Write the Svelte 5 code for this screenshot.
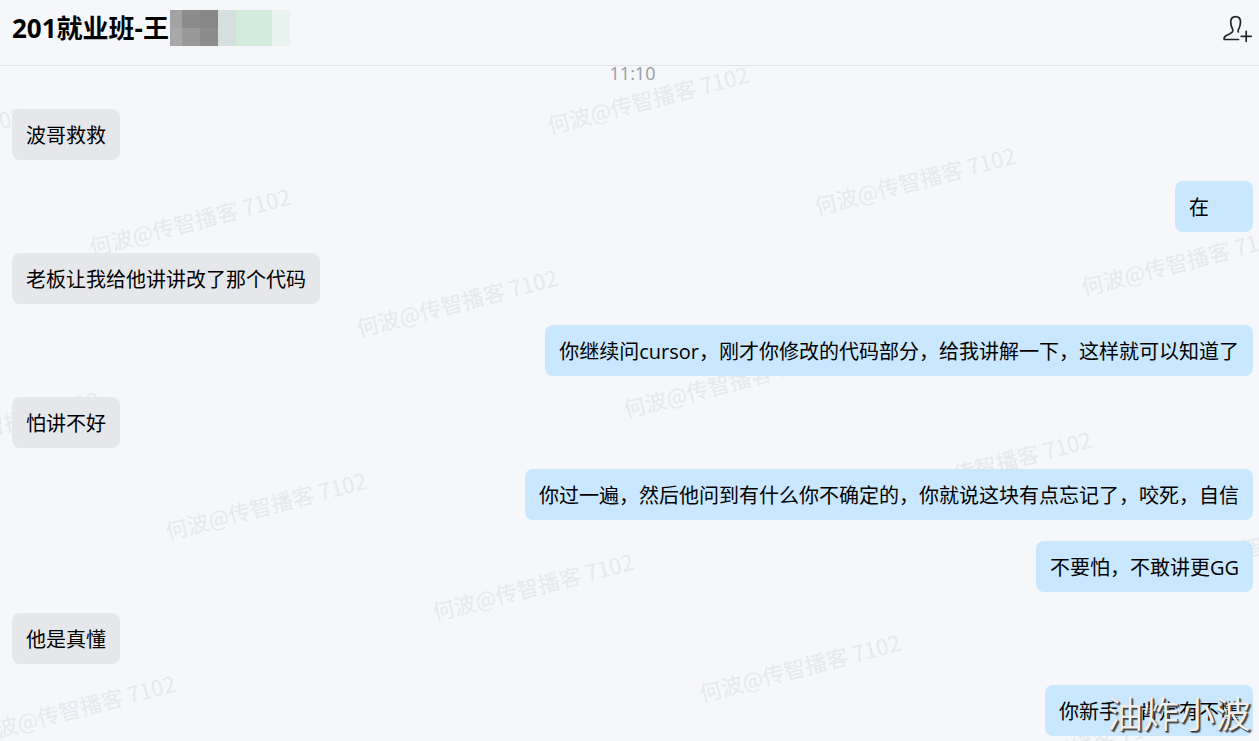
<script>
  const messages = [
    { id: 1, mine: false, text: '波哥救救' },
    { id: 2, mine: true, text: '在' },
    { id: 3, mine: false, text: '老板让我给他讲讲改了那个代码' },
    { id: 4, mine: true, text: '你继续问cursor，刚才你修改的代码部分，给我讲解一下，这样就可以知道了' },
    { id: 5, mine: false, text: '怕讲不好' },
    { id: 6, mine: true, text: '你过一遍，然后他问到有什么你不确定的，你就说这块有点忘记了，咬死，自信' },
    { id: 7, mine: true, text: '不要怕，不敢讲更GG' },
    { id: 8, mine: false, text: '他是真懂' },
    { id: 9, mine: true, text: '你新手，肯定有不懂' },
  ];

  // The watermark repeats on a slanted grid: each column and row shifts both axes.
  const cells = [
    [0, 0], [1, 0], [2, 0],
    [-3, 1], [-2, 1], [-1, 1], [0, 1], [1, 1], [2, 1],
    [-3, 2], [-2, 2], [-1, 2], [0, 2], [1, 2],
    [-3, 3],
  ];
  const marks = cells.map(([c, r]) => ({
    x: 550 + 267 * c + 76 * r,
    y: 68 + 81 * c + 284 * r,
  }));

  const mosaic = [
    { x: 0, y: 0, w: 12, h: 18, fill: '#a3a3a3' },
    { x: 12, y: 0, w: 18, h: 18, fill: '#8c8c8c' },
    { x: 30, y: 0, w: 18, h: 18, fill: '#868686' },
    { x: 0, y: 18, w: 12, h: 18, fill: '#a8a8a8' },
    { x: 12, y: 18, w: 18, h: 18, fill: '#999999' },
    { x: 30, y: 18, w: 18, h: 18, fill: '#8c8c8c' },
    { x: 48, y: 0, w: 18, h: 36, fill: '#d5dfde' },
    { x: 66, y: 0, w: 36, h: 36, fill: '#d2ecdc' },
    { x: 102, y: 0, w: 18, h: 36, fill: '#e8f3ef' },
  ];
</script>

<div class="page">
  <header>
    <h1>201就业班-王</h1>
    <svg class="mosaic" width="120" height="36" viewBox="0 0 120 36" aria-hidden="true" shape-rendering="crispEdges">
      {#each mosaic as m}
        <rect x={m.x} y={m.y} width={m.w} height={m.h} fill={m.fill} />
      {/each}
    </svg>
    <button type="button" aria-label="添加成员">
      <svg width="32" height="30" viewBox="0 0 32 30" fill="none" stroke="#22252b" stroke-width="1.7" stroke-linecap="round" stroke-linejoin="round">
        <path d="M17.5 25.5H3.2C2.5 22.8 4.5 21.8 8 20.3C11 19 12.6 17.4 11.6 15.2C10.4 12.8 9.6 10.4 9.7 8C9.8 4.5 11.8 2.6 14.6 2.6C17.6 2.6 19.5 4.7 19.5 8C19.5 11.2 18.6 13.5 17.3 15.8C16.9 16.6 16.9 17.2 17.4 17.9" />
        <path d="M25.2 17.3V27.3M20.2 22.3H30.2" />
      </svg>
    </button>
  </header>

  <main>
    <svg class="watermark" aria-hidden="true">
      {#each marks as m}
        <text transform="translate({m.x} {m.y}) rotate(-14.5)">何波@传智播客 7102</text>
      {/each}
    </svg>
    <time>11:10</time>
    <ul>
      {#each messages as m (m.id)}
        <li class:mine={m.mine}><p>{m.text}</p></li>
      {/each}
    </ul>
    <span class="signature">油炸小波</span>
  </main>
</div>

<style>
  :global(body) {
    background: #f5f7fb;
  }
  .page {
    display: flex;
    flex-direction: column;
    min-height: 100vh;
    font-family: "Open Sans", "Noto Sans CJK SC", sans-serif;
    color: #000;
    background: #f5f7fb;
  }
  header {
    display: flex;
    align-items: center;
    gap: 1px;
    height: 66px;
    box-sizing: border-box;
    padding: 0 6px 10px 12px;
    border-bottom: 1px solid #e1e3e8;
  }
  h1 {
    margin: 0;
    font-size: 26px;
    line-height: 36px;
    font-weight: 700;
    white-space: nowrap;
  }
  .mosaic {
    flex: none;
  }
  button {
    display: flex;
    margin-left: auto;
    padding: 2px 0 0;
    border: 0;
    background: none;
    cursor: pointer;
  }
  main {
    position: relative;
    flex: 1;
    overflow: hidden;
    display: flex;
    flex-direction: column;
    gap: 29px;
    padding: 0 6px 5px 12px;
  }
  .watermark {
    position: absolute;
    inset: 0;
    width: 100%;
    height: 100%;
    font-family: "Noto Sans CJK SC", sans-serif;
    font-size: 22px;
    fill: #e6e8ec;
  }
  time {
    position: relative;
    align-self: center;
    font-size: 18px;
    line-height: 14px;
    color: #999ca0;
  }
  ul {
    position: relative;
    display: flex;
    flex-direction: column;
    gap: 21px;
    margin: 0;
    padding: 0;
    list-style: none;
  }
  li {
    display: flex;
  }
  .mine {
    justify-content: flex-end;
  }
  p {
    box-sizing: border-box;
    min-width: 78px;
    margin: 0;
    padding: 13px 14px 10px;
    border-radius: 8px;
    font-size: 20px;
    line-height: 28px;
    background: #e6e7ea;
  }
  .mine p {
    background: #c9e7ff;
  }
  .signature {
    position: absolute;
    right: 8px;
    bottom: 6px;
    font-size: 36px;
    line-height: 40px;
    color: #efefef;
    text-shadow: 1px 1px 1px #333, 2px 2px 1px #666;
  }
</style>
